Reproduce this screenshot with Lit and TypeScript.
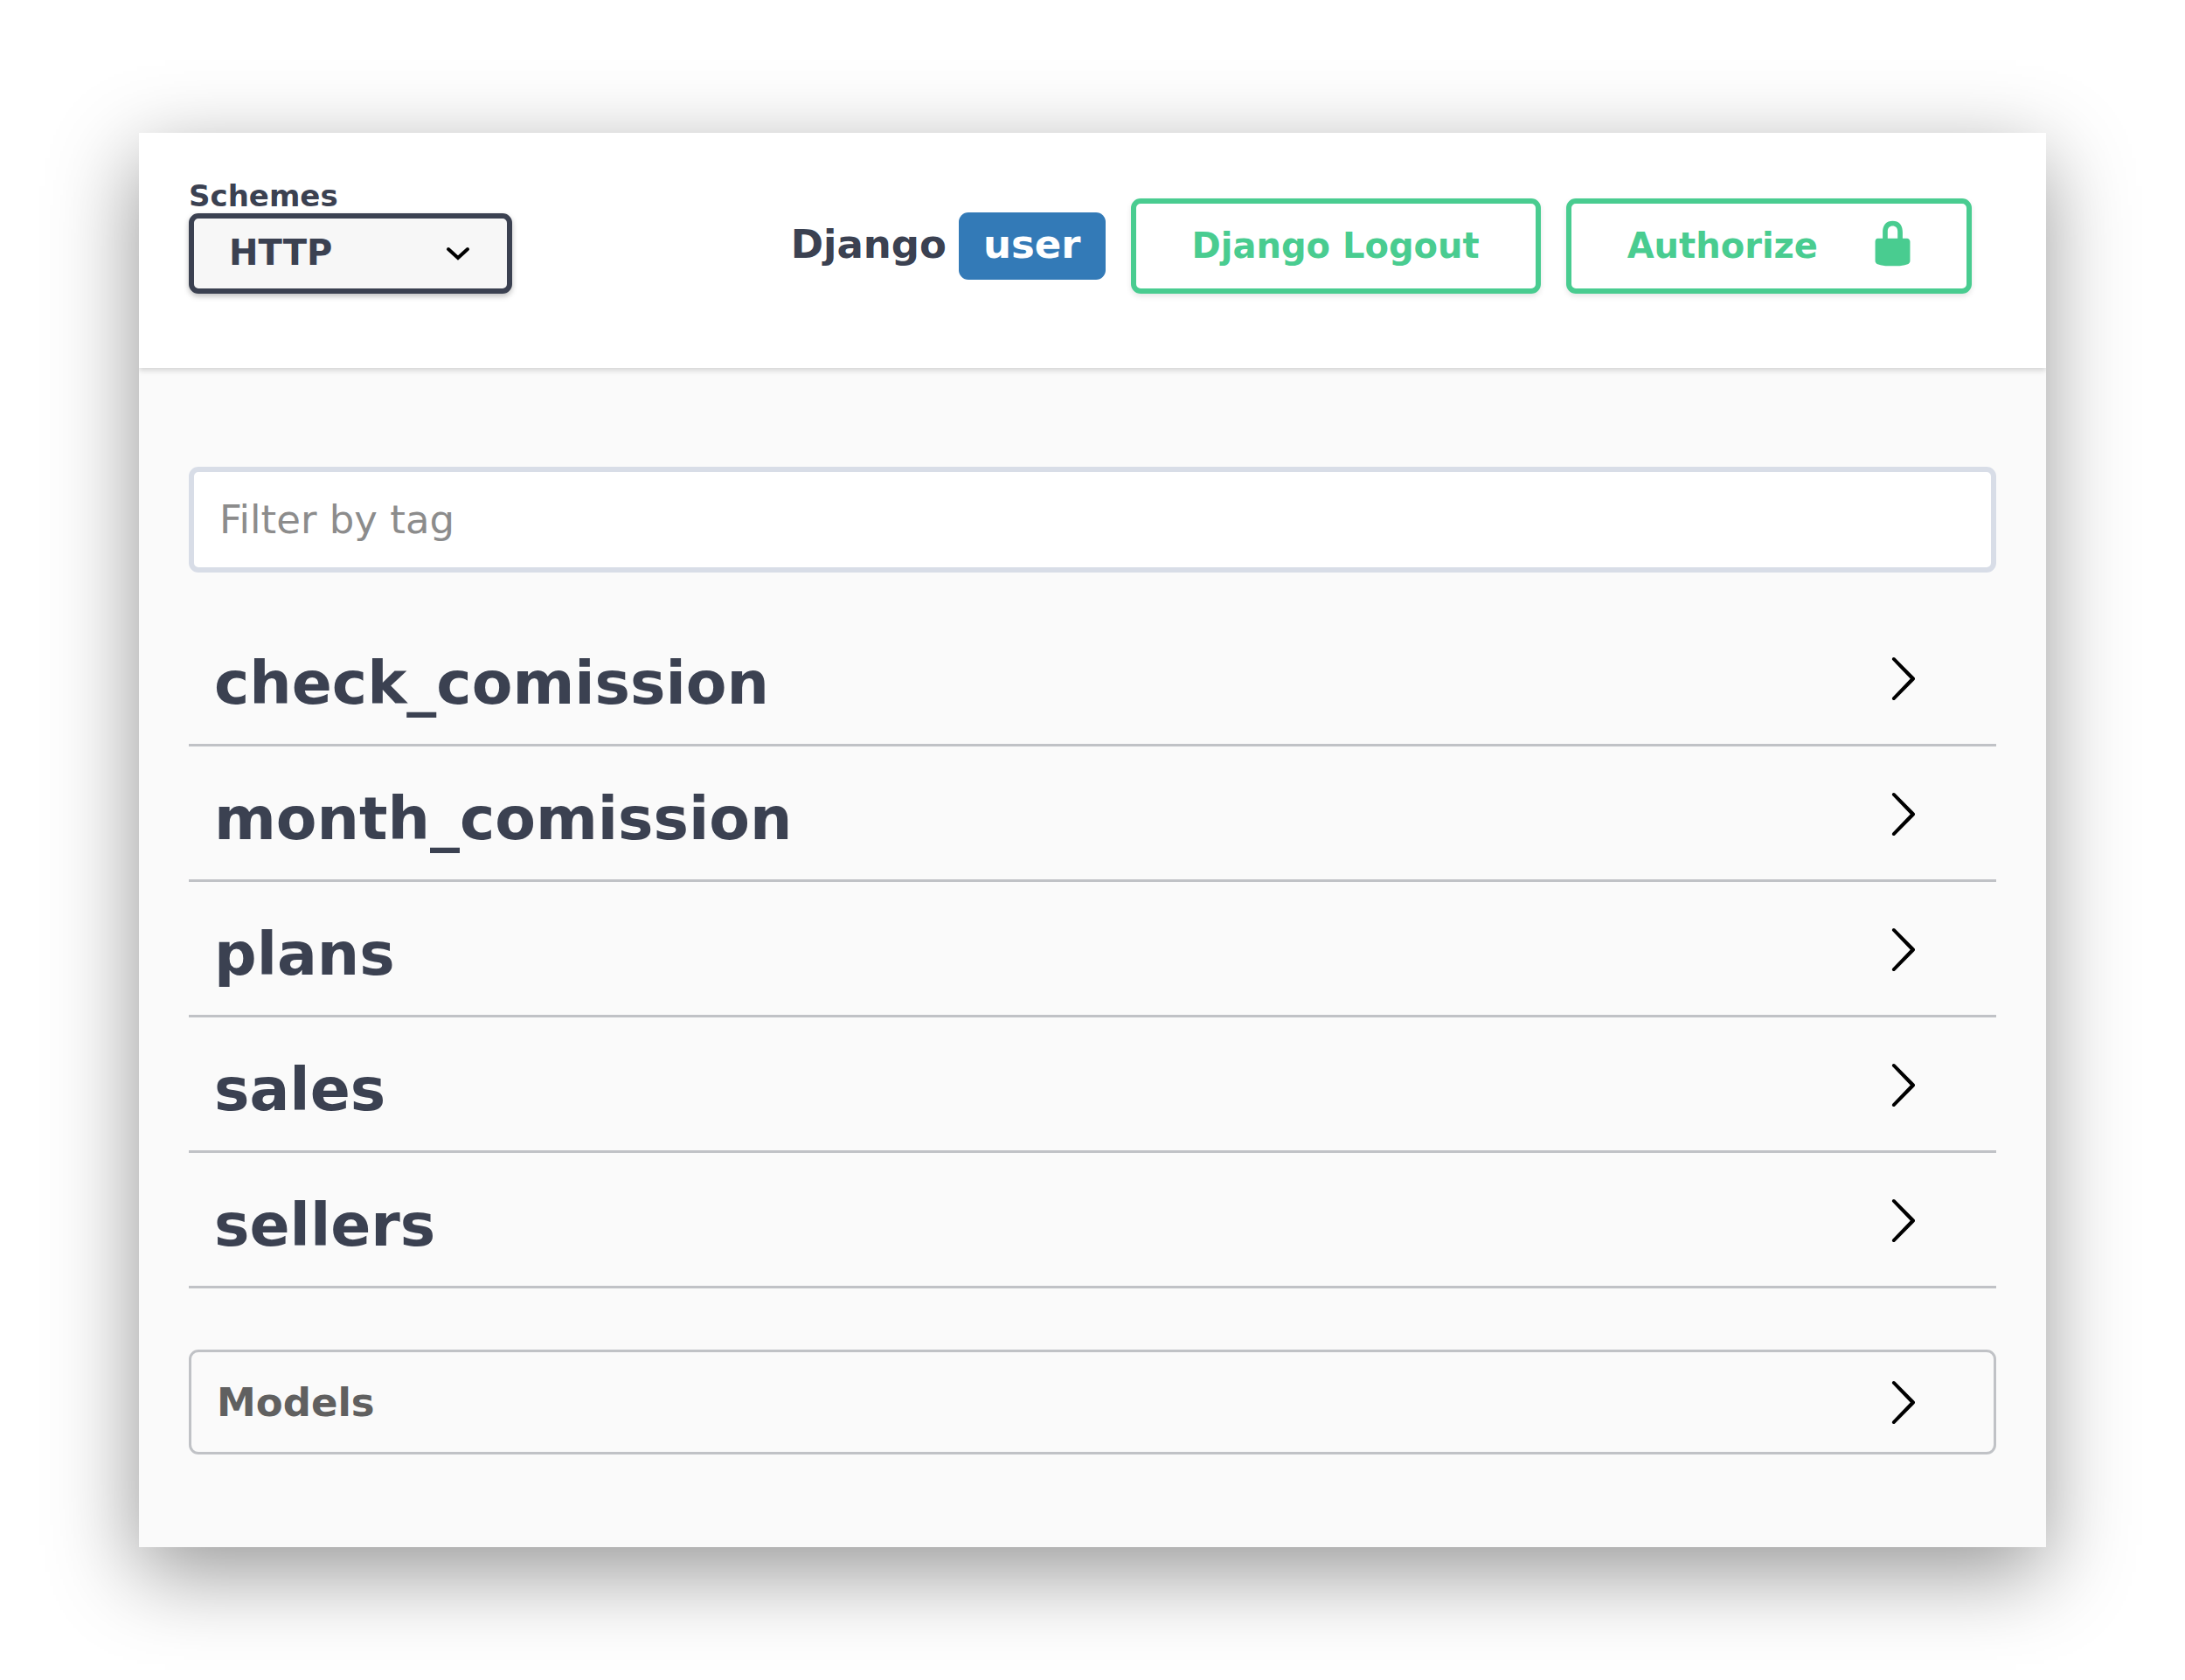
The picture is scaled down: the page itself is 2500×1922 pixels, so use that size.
import { LitElement, html, css, svg } from "lit";
import { customElement, property } from "lit/decorators.js";

const chevronPath = svg`<path d="M13.25 10L6.109 2.58c-.268-.27-.268-.707 0-.979.268-.27.701-.27.969 0l7.83 7.908c.268.271.268.709 0 .979l-7.83 7.908c-.268.271-.701.27-.969 0-.268-.269-.268-.707 0-.979L13.25 10z" />`;

const chevron = html`<svg class="chevron" viewBox="0 0 20 20" aria-hidden="true">${chevronPath}</svg>`;

/* One collapsible API tag, underlined across the full width. */
@customElement("tag-row")
export class TagRow extends LitElement {
  @property() name = "";

  static styles = css`
    :host {
      display: block;
    }
    .heading {
      margin: 0;
      font: inherit;
    }
    .row {
      display: flex;
      align-items: center;
      justify-content: space-between;
      box-sizing: border-box;
      width: 100%;
      min-height: 155px;
      padding: 2px 79px 0 29px;
      border: 0;
      border-bottom: 3px solid rgba(59, 65, 81, 0.3);
      background: none;
      color: #3b4151;
      font: bold 68px/80px "DejaVu Sans", sans-serif;
      text-align: left;
      cursor: pointer;
    }
    .name {
      padding-top: 12px;
    }
    .chevron {
      flex: none;
      width: 57px;
      height: 57px;
      fill: #000;
    }
  `;

  render() {
    return html`<h3 class="heading">
      <button class="row" type="button" aria-expanded="false">
        <span class="name">${this.name}</span>${chevron}
      </button>
    </h3>`;
  }
}

@customElement("app-root")
export class AppRoot extends LitElement {
  private tags = ["check_comission", "month_comission", "plans", "sales", "sellers"];

  static styles = css`
    :host {
      display: block;
      padding: 152px 159px;
      background: #fff;
      color: #3b4151;
      font-family: "DejaVu Sans", sans-serif;
    }
    .window {
      background: #fafafa;
      box-shadow: -2px 29px 92px rgba(0, 0, 0, 0.41);
    }
    .page {
      overflow: hidden;
    }
    .topbar {
      display: flex;
      align-items: flex-end;
      justify-content: space-between;
      padding: 52px 85px 85px 57px;
      background: #fff;
      box-shadow: 0 3px 6px rgba(0, 0, 0, 0.15);
    }
    .schemes {
      display: flex;
      flex-direction: column;
    }
    .schemes-label {
      font-size: 34px;
      line-height: 40px;
      font-weight: bold;
    }
    .select-wrap {
      display: grid;
      align-items: center;
    }
    .select {
      grid-area: 1 / 1;
      appearance: none;
      box-sizing: border-box;
      width: 370px;
      height: 92px;
      margin: 0;
      padding: 0 115px 2px 40px;
      border: 6px solid #3b4151;
      border-radius: 11px;
      background: #f7f7f7;
      box-shadow: 0 3px 6px rgba(0, 0, 0, 0.25);
      color: #3b4151;
      font: bold 40px "DejaVu Sans", sans-serif;
    }
    .select-arrow {
      grid-area: 1 / 1;
      justify-self: end;
      width: 28px;
      height: 17px;
      margin-right: 48px;
      fill: none;
      stroke: #000;
      stroke-width: 4;
      stroke-linecap: round;
      pointer-events: none;
    }
    .auth {
      display: flex;
      align-items: center;
      gap: 29px;
    }
    .session {
      display: flex;
      align-items: baseline;
      gap: 14px;
      font-size: 45px;
      line-height: 54px;
      font-weight: bold;
    }
    .user {
      padding: 10px 28px 13px;
      border-radius: 11px;
      background: #337ab7;
      color: #fff;
    }
    .btn {
      display: flex;
      align-items: center;
      gap: 57px;
      box-sizing: border-box;
      height: 109px;
      padding: 0 64px 2px;
      border: 6px solid #49cc90;
      border-radius: 11px;
      background: transparent;
      box-shadow: 0 3px 6px rgba(0, 0, 0, 0.1);
      color: #49cc90;
      font: bold 40px "DejaVu Sans", sans-serif;
      text-decoration: none;
      cursor: pointer;
    }
    .authorize {
      padding-right: 56px;
    }
    .lock {
      width: 57px;
      height: 57px;
      margin-bottom: 4px;
      fill: #49cc90;
    }
    .content {
      padding: 113px 57px 106px;
    }
    .filter {
      display: block;
      box-sizing: border-box;
      width: 100%;
      height: 121px;
      margin: 0 0 44px;
      padding: 0 29px;
      border: 6px solid #d8dde7;
      border-radius: 11px;
      background: #fff;
      color: #3b4151;
      font: 45px "DejaVu Sans", sans-serif;
    }
    .filter::placeholder {
      color: #8c8c8c;
      opacity: 1;
    }
    .models-heading {
      margin: 70px 0 0;
      font: inherit;
    }
    .models {
      display: flex;
      align-items: center;
      justify-content: space-between;
      box-sizing: border-box;
      width: 100%;
      height: 120px;
      padding: 0 76px 0 29px;
      border: 3px solid rgba(59, 65, 81, 0.3);
      border-radius: 11px;
      background: none;
      color: #606060;
      font: bold 45px "DejaVu Sans", sans-serif;
      cursor: pointer;
    }
    .chevron {
      flex: none;
      width: 57px;
      height: 57px;
      fill: #000;
    }
  `;

  render() {
    return html`
      <div class="window">
        <div class="page">
          <header class="topbar">
            <div class="schemes">
              <label class="schemes-label" for="schemes">Schemes</label>
              <div class="select-wrap">
                <select class="select" id="schemes">
                  <option value="http">HTTP</option>
                </select>
                <svg class="select-arrow" viewBox="0 0 28 17" aria-hidden="true">
                  <path d="M3 3L14 13L25 3" />
                </svg>
              </div>
            </div>
            <div class="auth">
              <div class="session">
                <span>Django</span>
                <span class="user">user</span>
              </div>
              <a class="btn" href="#logout">Django Logout</a>
              <button class="btn authorize" type="button">
                <span>Authorize</span>
                <svg class="lock" viewBox="0 0 20 20" aria-hidden="true">
                  <path
                    d="M15.8 8H14V5.6C14 2.703 12.665 1 10 1 7.334 1 6 2.703 6 5.6V8H4c-.553 0-1 .646-1 1.199V17c0 .549.428 1.139.951 1.307l1.197.387C5.672 18.861 6.55 19 7.1 19h5.8c.549 0 1.428-.139 1.951-.307l1.196-.387c.524-.167.953-.757.953-1.306V9.199C17 8.646 16.352 8 15.8 8zM12 8H8V5.199C8 3.754 8.797 3 10 3c1.203 0 2 .754 2 2.199V8z"
                  />
                </svg>
              </button>
            </div>
          </header>
          <main class="content">
            <input class="filter" type="text" placeholder="Filter by tag" aria-label="Filter by tag" />
            ${this.tags.map((tag) => html`<tag-row .name=${tag}></tag-row>`)}
            <h4 class="models-heading">
              <button class="models" type="button" aria-expanded="false">
                <span>Models</span>${chevron}
              </button>
            </h4>
          </main>
        </div>
      </div>
    `;
  }
}
